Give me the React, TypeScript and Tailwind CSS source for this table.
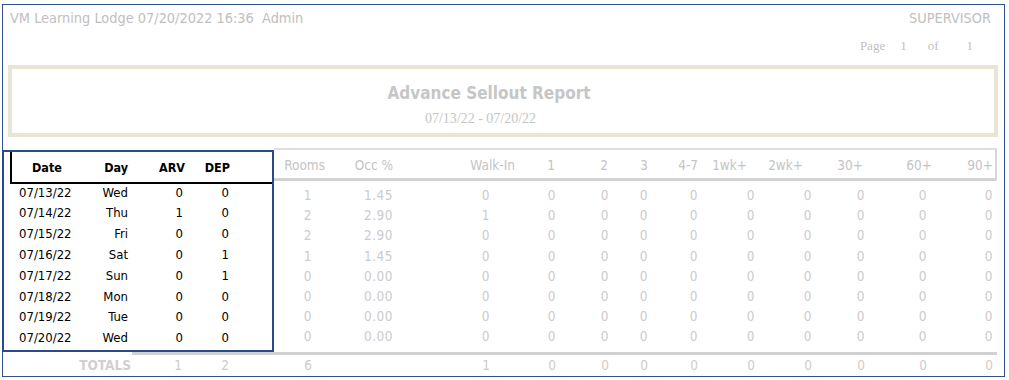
import React from "react";

const sans = "font-['DejaVu_Sans_Condensed','DejaVu_Sans',sans-serif]";
const serif = "font-['Liberation_Serif',serif]";

const cols = [
  { w: "w-[63px]", h: "pr-[12px]", v: "pr-[25px]", label: "Rooms" },
  { w: "w-[63px]", h: "pr-[7px]", v: "pr-[7px]", label: "Occ %" },
  { w: "w-[130px]", h: "pr-[15px]", v: "pr-[40px]", label: "Walk-In" },
  { w: "w-[50px]", h: "pr-[25px]", v: "pr-[24px]", label: "1" },
  { w: "w-[45px]", h: "pr-[17px]", v: "pr-[16px]", label: "2" },
  { w: "w-[35px]", h: "pr-[12px]", v: "pr-[12px]", label: "3" },
  { w: "w-[45px]", h: "pr-[7px]", v: "pr-[7px]", label: "4-7" },
  { w: "w-[55px]", h: "pr-[13px]", v: "pr-[5px]", label: "1wk+" },
  { w: "w-[55px]", h: "pr-[12px]", v: "pr-[3px]", label: "2wk+" },
  { w: "w-[55px]", h: "pr-[7px]", v: "pr-[5px]", label: "30+" },
  { w: "w-[65px]", h: "pr-[3px]", v: "pr-[8px]", label: "60+" },
  { w: "w-[60px]", h: "pr-[2px]", v: "pr-[2px]", label: "90+" },
];

const rows = [
  ["07/13/22", "Wed", "0", "0", "1", "1.45", "0"],
  ["07/14/22", "Thu", "1", "0", "2", "2.90", "1"],
  ["07/15/22", "Fri", "0", "0", "2", "2.90", "0"],
  ["07/16/22", "Sat", "0", "1", "1", "1.45", "0"],
  ["07/17/22", "Sun", "0", "1", "0", "0.00", "0"],
  ["07/18/22", "Mon", "0", "0", "0", "0.00", "0"],
  ["07/19/22", "Tue", "0", "0", "0", "0.00", "0"],
  ["07/20/22", "Wed", "0", "0", "0", "0.00", "0"],
];

const totals = ["6", "", "1", "0", "0", "0", "0", "0", "0", "0", "0", "0"];

function rightValues(r: string[]) {
  return [r[4], r[5], r[6], "0", "0", "0", "0", "0", "0", "0", "0", "0"];
}

export default function App() {
  return (
    <div className="w-[1009px] h-[380px] bg-white pt-[4px] pl-[2px]">
      <div className="w-[1003px] h-[373px] border border-[#2f4f8f]">
        {/* top line */}
        <div className={`h-[27px] flex items-center justify-between pl-[7px] pr-[13px] text-[14.4px] text-[#c0c0c0] ${sans}`}>
          <span className="whitespace-pre">VM Learning Lodge 07/20/2022 16:36  Admin</span>
          <span>SUPERVISOR</span>
        </div>
        {/* page line */}
        <div className={`h-[28px] flex items-center justify-end pr-[31px] text-[13px] text-[#c0c0c0] ${serif}`}>
          <span>Page</span>
          <span className="ml-[15px]">1</span>
          <span className="ml-[21px]">of</span>
          <span className="ml-[28px]">1</span>
        </div>
        {/* title box */}
        <div className="mt-[5px] ml-[5px] w-[990px] h-[72px] border-4 border-[#e8e6d3] flex flex-col items-center">
          <div className={`mt-[13px] mr-[28px] text-[17px] leading-[22px] font-bold text-[#c6c6c6] ${sans}`}>
            Advance Sellout Report
          </div>
          <div className={`mt-[7px] mr-[45px] text-[14px] leading-[16px] text-[#c6c6c6] ${serif}`}>
            07/13/22 - 07/20/22
          </div>
        </div>
        {/* table */}
        <div className={`mt-[11px] flex items-start ${sans}`}>
          {/* highlighted left box */}
          <div className="-ml-[1px] mt-[2px] w-[272px] h-[202px] border-2 border-[#2b4a8b] bg-white">
            <div className="ml-[6px] h-[32px] pt-[2px] border-l-2 border-b-2 border-black flex items-center text-[12.5px] font-bold text-black">
              <div className="w-[68px] text-center pl-[2px]">Date</div>
              <div className="w-[55px] text-right pr-[7px]">Day</div>
              <div className="w-[55px] text-right pr-[5px]">ARV</div>
              <div className="w-[50px] text-right pr-[10px]">DEP</div>
            </div>
            <div className="-mt-[2px]">
              {rows.map((r, i) => (
                <div key={i} className="h-[20.8px] flex items-center text-[13px] text-black">
                  <div className="w-[76px] pl-[15px]">{r[0]}</div>
                  <div className="w-[55px] text-right pr-[7px]">{r[1]}</div>
                  <div className="w-[55px] text-right pr-[7px]">{r[2]}</div>
                  <div className="w-[50px] text-right pr-[11px]">{r[3]}</div>
                </div>
              ))}
            </div>
          </div>
          {/* right part */}
          <div className="w-[723px] h-[204px]">
            <div className="h-[33px] pt-[2px] border-t-2 border-t-[#dedede] border-b-[3px] border-b-[#d2d2d2] border-r-2 border-r-[#d8d8d8] flex items-center text-[13.5px] text-[#c4c4c4]">
              {cols.map((c, i) => (
                <div key={i} className={`${c.w} ${c.h} text-right`}>{c.label}</div>
              ))}
            </div>
            <div className="mt-[4px]">
              {rows.map((r, i) => (
                <div key={i} className="h-[20.2px] flex items-center text-[13.5px] text-[#cccccc]">
                  {rightValues(r).map((v, j) => (
                    <div key={j} className={`${cols[j].w} ${cols[j].v} text-right tracking-[0.5px]`}>{v}</div>
                  ))}
                </div>
              ))}
            </div>
          </div>
        </div>
        {/* totals */}
        <div className={`flex ${sans}`}>
          <div className="w-[129px] h-[23px] pt-[3px] flex items-center justify-end pr-[1px] overflow-hidden text-[13.5px] font-bold text-[#d0d0d0]">
            TOTALS
          </div>
          <div className="w-[865px] h-[23px] border-t-[3px] border-[#d0d0d0] flex items-center text-[13.5px] text-[#cccccc]">
            <div className="w-[58px] text-right pr-[8px]">1</div>
            <div className="w-[50px] text-right pr-[11px]">2</div>
            <div className="w-[34px]"></div>
            {totals.map((v, j) => (
              <div key={j} className={`${cols[j].w} ${cols[j].v} text-right`}>{v}</div>
            ))}
          </div>
        </div>
      </div>
    </div>
  );
}
